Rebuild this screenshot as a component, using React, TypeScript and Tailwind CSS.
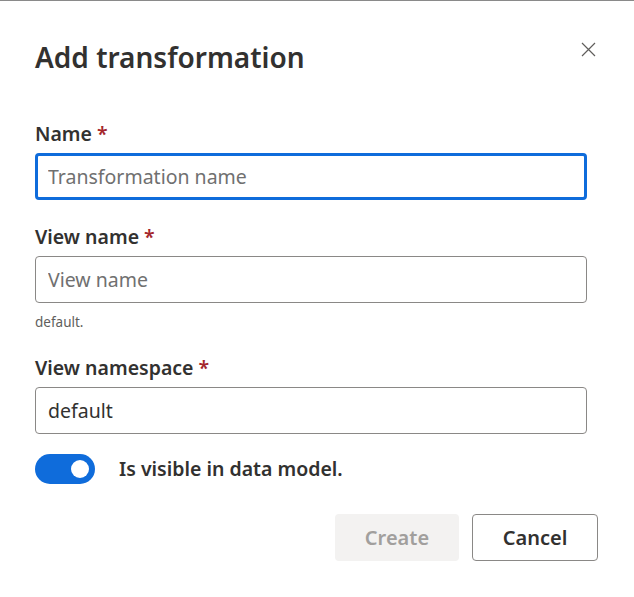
import React, { useState } from 'react';

const Label = ({ text }: { text: string }) => (
  <label className="flex items-center text-[19.5px] font-semibold leading-[26px] text-[#323130]">
    {text}
    <span className="ml-[5px] text-[#a4262c]">*</span>
  </label>
);

const App = () => {
  const [visible, setVisible] = useState(true);

  return (
    <div
      className="w-[634px] h-[597px] bg-white border-t border-[#8a8a8a] overflow-hidden"
      style={{ fontFamily: '"Noto Sans", "Open Sans", sans-serif' }}
    >
      <div className="px-[35px]">
        {/* Header */}
        <div className="flex items-start justify-between pt-[36px]">
          <h1 className="text-[28px] font-semibold leading-[40px] text-[#323130]">Add transformation</h1>
          <button className="mt-[2px] mr-[1px] w-[20px] h-[20px] flex items-center justify-center text-[#605e5c]">
            <svg width="15" height="15" viewBox="0 0 15 15" fill="none" stroke="currentColor" strokeWidth="1.2">
              <path d="M1 1 L14 14 M14 1 L1 14" />
            </svg>
          </button>
        </div>

        {/* Name */}
        <div className="mt-[44px]">
          <Label text="Name" />
          <input
            autoFocus
            placeholder="Transformation name"
            className="mt-[6px] w-[552px] h-[47px] rounded-[4px] border-[3px] border-[#0f6cdb] px-[10px] text-[19.5px] text-[#323130] placeholder:text-[#707070] outline-none"
          />
        </div>

        {/* View name */}
        <div className="mt-[24px]">
          <Label text="View name" />
          <input
            placeholder="View name"
            className="mt-[6px] w-[552px] h-[47px] rounded-[4px] border border-[#8a8886] px-[12px] text-[19.5px] text-[#323130] placeholder:text-[#707070] outline-none"
          />
          <div className="mt-[10px] text-[13.5px] leading-[18px] text-[#605e5c]">default.</div>
        </div>

        {/* View namespace */}
        <div className="mt-[24px]">
          <Label text="View namespace" />
          <input
            defaultValue="default"
            className="mt-[6px] w-[552px] h-[47px] rounded-[4px] border border-[#8a8886] px-[12px] text-[19.5px] text-[#323130] outline-none"
          />
        </div>

        {/* Toggle */}
        <div className="mt-[20px] flex items-center gap-[24px]">
          <button
            onClick={() => setVisible(!visible)}
            className={`relative w-[60px] h-[30px] rounded-full ${visible ? 'bg-[#0f6cdb]' : 'bg-[#c8c6c4]'}`}
          >
            <span
              className={`absolute top-[6px] w-[18px] h-[18px] rounded-full bg-white ${visible ? 'left-[36px]' : 'left-[6px]'}`}
            />
          </button>
          <span className="text-[19.5px] font-semibold text-[#323130]">Is visible in data model.</span>
        </div>

        {/* Footer */}
        <div className="mt-[30px] flex justify-end gap-[13px] mr-[1px]">
          <button
            disabled
            className="w-[124px] h-[47px] rounded-[4px] bg-[#f3f2f1] text-[20px] font-semibold text-[#a19f9d]"
          >
            Create
          </button>
          <button className="w-[126px] h-[47px] rounded-[4px] border border-[#8a8886] bg-white text-[20px] font-semibold text-[#323130]">
            Cancel
          </button>
        </div>
      </div>
    </div>
  );
};

export default App;
